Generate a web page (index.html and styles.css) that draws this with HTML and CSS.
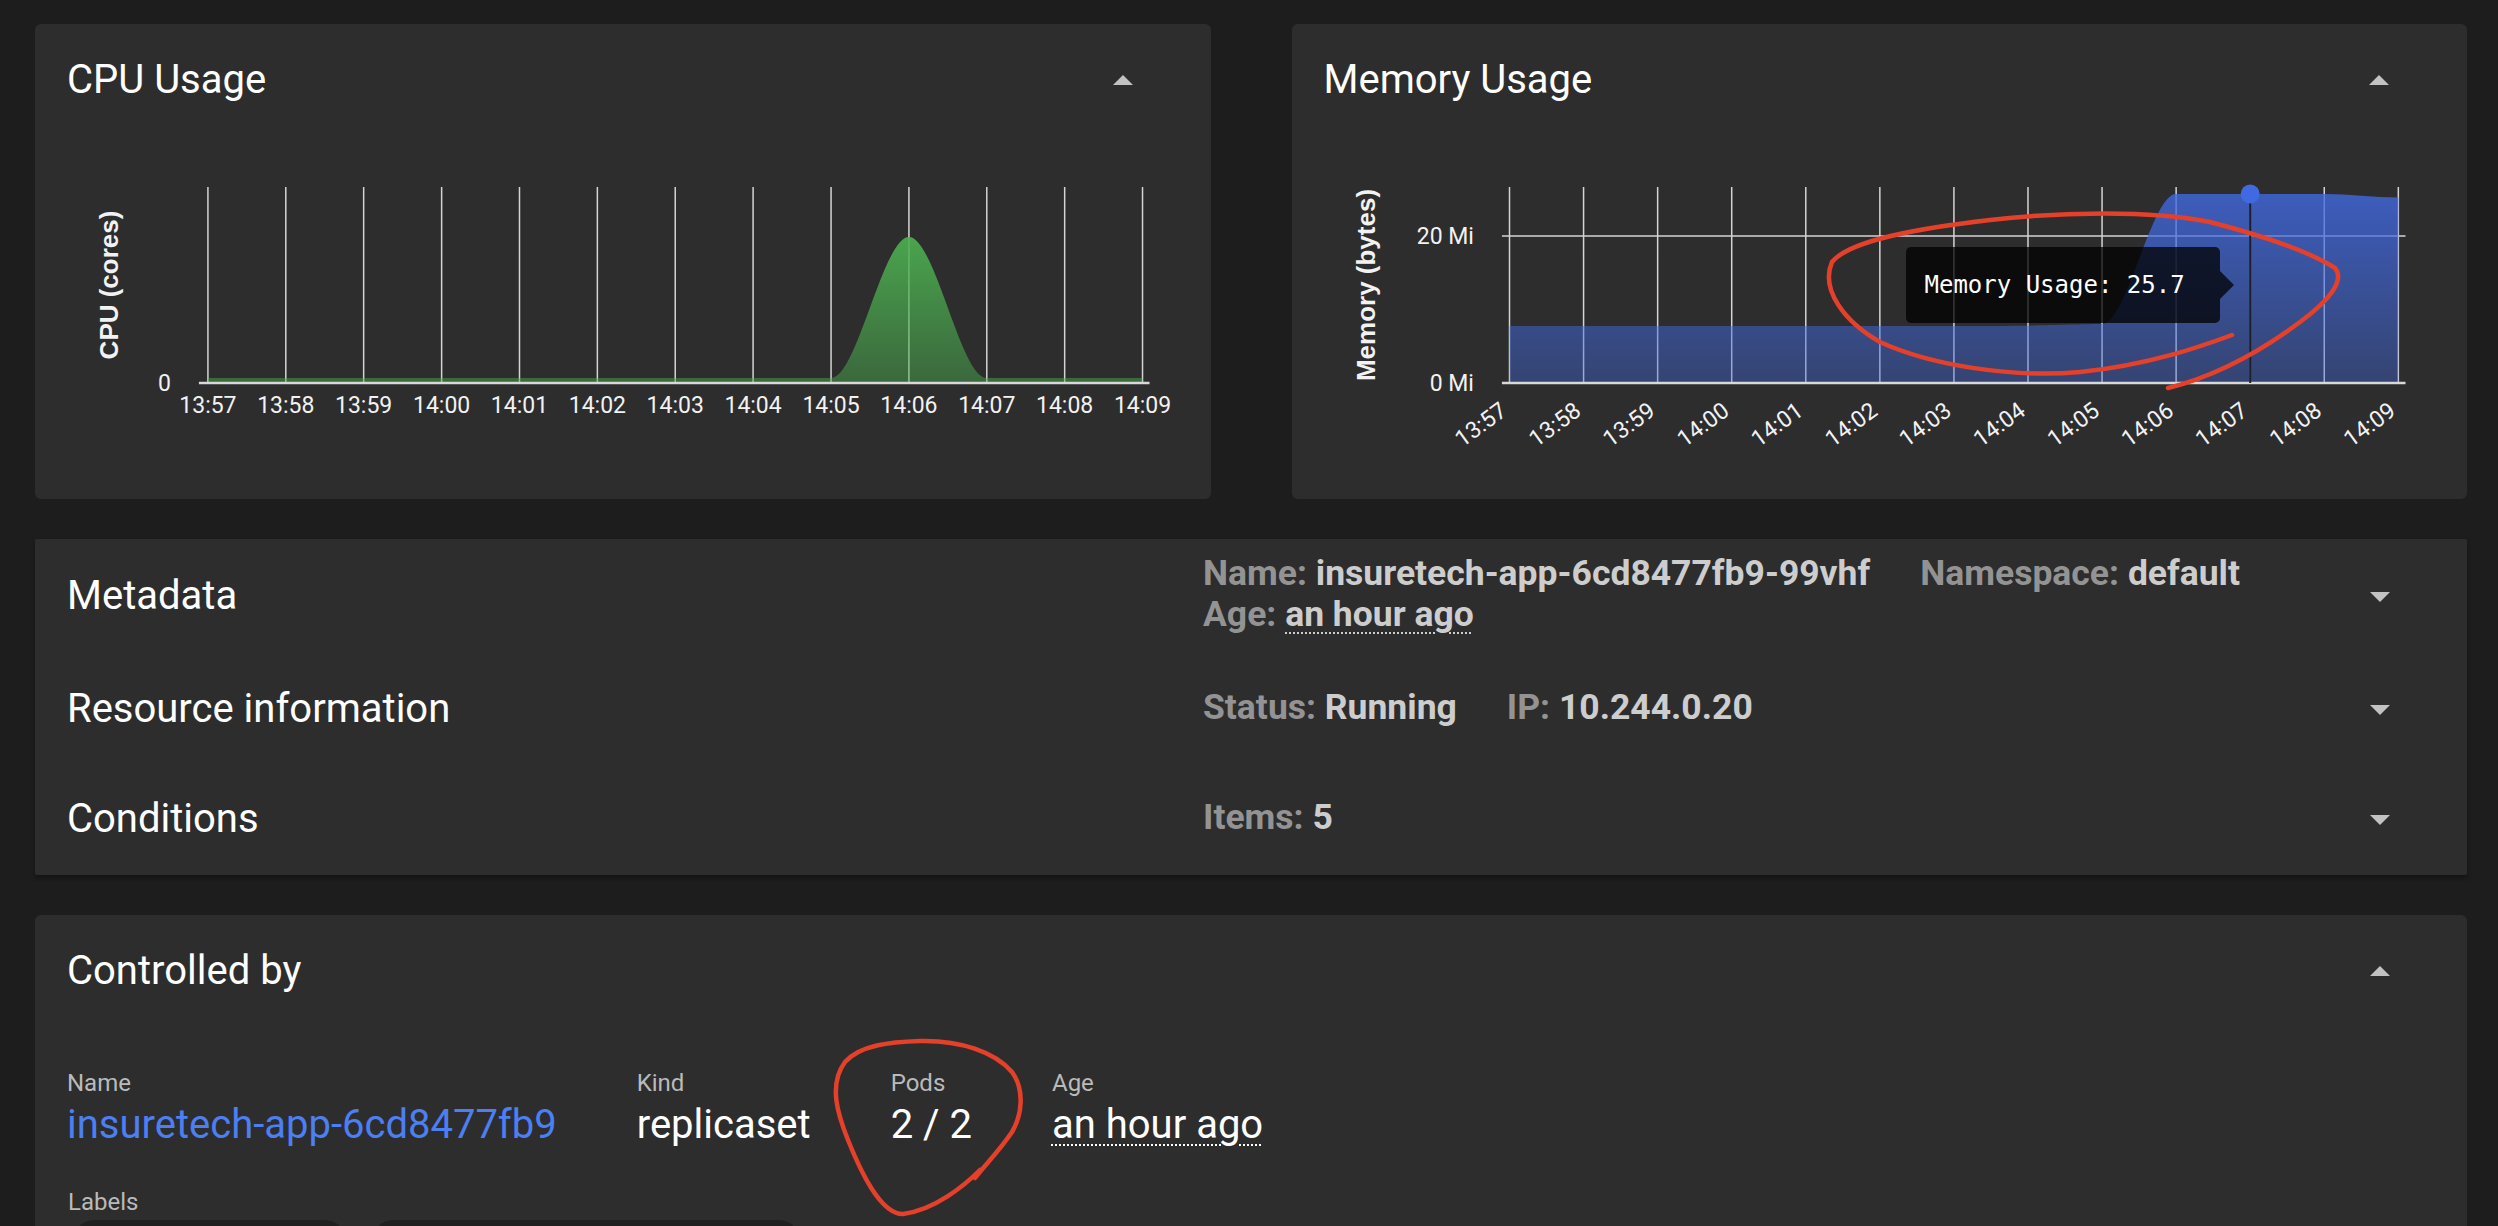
FILE: index.html
```html
<!DOCTYPE html>
<html lang="en">
<head>
<meta charset="utf-8">
<title>Pod details</title>
<link rel="stylesheet" href="styles.css">
</head>
<body>
<div class="page">
  <div class="charts">
    <section class="card chart-card">
      <header class="card-head">
        <h2 class="card-title">CPU Usage</h2>
        <svg class="caret" viewBox="0 0 20 10"><polygon points="0,10 10,0 20,10"/></svg>
      </header>
      <svg class="chart" viewBox="0 0 1176 397" preserveAspectRatio="none">
        <defs>
          <linearGradient id="gGreen" gradientUnits="userSpaceOnUse" x1="0" y1="135" x2="0" y2="281">
            <stop offset="0" stop-color="#4caf50" stop-opacity="0.92"/>
            <stop offset="1" stop-color="#4caf50" stop-opacity="0.45"/>
          </linearGradient>
        </defs>
        <g class="grid">
          <line x1="173" y1="85" x2="173" y2="281"/>
          <line x1="250.9" y1="85" x2="250.9" y2="281"/>
          <line x1="328.8" y1="85" x2="328.8" y2="281"/>
          <line x1="406.8" y1="85" x2="406.8" y2="281"/>
          <line x1="484.7" y1="85" x2="484.7" y2="281"/>
          <line x1="562.6" y1="85" x2="562.6" y2="281"/>
          <line x1="640.5" y1="85" x2="640.5" y2="281"/>
          <line x1="718.4" y1="85" x2="718.4" y2="281"/>
          <line x1="796.4" y1="85" x2="796.4" y2="281"/>
          <line x1="874.3" y1="85" x2="874.3" y2="281"/>
          <line x1="952.2" y1="85" x2="952.2" y2="281"/>
          <line x1="1030.1" y1="85" x2="1030.1" y2="281"/>
          <line x1="1108" y1="85" x2="1108" y2="281"/>
        </g>
        <path d="M173,276 L796.4,276 C822.4,276 848.3,135 874.3,135 C900.3,135 926.2,276 952.2,276 L1108,276 L1108,281 L173,281 Z" fill="url(#gGreen)"/>
        <line class="axis" x1="164" y1="281" x2="1115" y2="281"/>
        <text class="tick" x="136" y="289" text-anchor="end">0</text>
        <text class="axis-title" x="74" y="183" transform="rotate(-90 74 183)" text-anchor="middle" dominant-baseline="central">CPU (cores)</text>
        <g class="tick" text-anchor="middle">
          <text x="173" y="311">13:57</text>
          <text x="250.9" y="311">13:58</text>
          <text x="328.8" y="311">13:59</text>
          <text x="406.8" y="311">14:00</text>
          <text x="484.7" y="311">14:01</text>
          <text x="562.6" y="311">14:02</text>
          <text x="640.5" y="311">14:03</text>
          <text x="718.4" y="311">14:04</text>
          <text x="796.4" y="311">14:05</text>
          <text x="874.3" y="311">14:06</text>
          <text x="952.2" y="311">14:07</text>
          <text x="1030.1" y="311">14:08</text>
          <text x="1108" y="311">14:09</text>
        </g>
      </svg>
    </section>

    <section class="card chart-card">
      <header class="card-head">
        <h2 class="card-title">Memory Usage</h2>
        <svg class="caret" viewBox="0 0 20 10"><polygon points="0,10 10,0 20,10"/></svg>
      </header>
      <svg class="chart" viewBox="0 0 1176 397" preserveAspectRatio="none">
        <defs>
          <linearGradient id="gBlue" gradientUnits="userSpaceOnUse" x1="0" y1="92" x2="0" y2="281">
            <stop offset="0" stop-color="#4169e1" stop-opacity="0.8"/>
            <stop offset="1" stop-color="#4169e1" stop-opacity="0.38"/>
          </linearGradient>
        </defs>
        <g class="grid">
          <line x1="210" y1="134" x2="1114" y2="134"/>
          <line x1="217.6" y1="85" x2="217.6" y2="281"/>
          <line x1="291.7" y1="85" x2="291.7" y2="281"/>
          <line x1="365.8" y1="85" x2="365.8" y2="281"/>
          <line x1="439.9" y1="85" x2="439.9" y2="281"/>
          <line x1="514" y1="85" x2="514" y2="281"/>
          <line x1="588.1" y1="85" x2="588.1" y2="281"/>
          <line x1="662.2" y1="85" x2="662.2" y2="281"/>
          <line x1="736.3" y1="85" x2="736.3" y2="281"/>
          <line x1="810.4" y1="85" x2="810.4" y2="281"/>
          <line x1="884.5" y1="85" x2="884.5" y2="281"/>
          <line x1="958.6" y1="85" x2="958.6" y2="281"/>
          <line x1="1032.7" y1="85" x2="1032.7" y2="281"/>
          <line x1="1106.8" y1="85" x2="1106.8" y2="281"/>
        </g>
        <path d="M217.6,224 L700,224 C760,223.5 790,222 810.4,222 C835.1,222 859.8,92 884.5,92 L1032.7,92 C1057.4,92 1082.1,95.5 1106.8,95.5 L1106.8,281 L217.6,281 Z" fill="url(#gBlue)"/>
        <line class="axis" x1="210" y1="281" x2="1114" y2="281"/>
        <line class="cursor" x1="958.6" y1="92" x2="958.6" y2="281"/>
        <circle cx="958.6" cy="92" r="9.5" fill="#4169e1"/>
        <text class="tick" x="182" y="142" text-anchor="end">20 Mi</text>
        <text class="tick" x="182" y="289" text-anchor="end">0 Mi</text>
        <text class="axis-title" x="74" y="183" transform="rotate(-90 74 183)" text-anchor="middle" dominant-baseline="central">Memory (bytes)</text>
        <g class="tick" text-anchor="end">
          <text x="216.6" y="312" transform="rotate(-36 216.6 312)">13:57</text>
          <text x="290.7" y="312" transform="rotate(-36 290.7 312)">13:58</text>
          <text x="364.8" y="312" transform="rotate(-36 364.8 312)">13:59</text>
          <text x="438.9" y="312" transform="rotate(-36 438.9 312)">14:00</text>
          <text x="513" y="312" transform="rotate(-36 513 312)">14:01</text>
          <text x="587.1" y="312" transform="rotate(-36 587.1 312)">14:02</text>
          <text x="661.2" y="312" transform="rotate(-36 661.2 312)">14:03</text>
          <text x="735.3" y="312" transform="rotate(-36 735.3 312)">14:04</text>
          <text x="809.4" y="312" transform="rotate(-36 809.4 312)">14:05</text>
          <text x="883.5" y="312" transform="rotate(-36 883.5 312)">14:06</text>
          <text x="957.6" y="312" transform="rotate(-36 957.6 312)">14:07</text>
          <text x="1031.7" y="312" transform="rotate(-36 1031.7 312)">14:08</text>
          <text x="1105.8" y="312" transform="rotate(-36 1105.8 312)">14:09</text>
        </g>
      </svg>
      <div class="tooltip">Memory Usage: 25.7</div>
    </section>
  </div>

  <section class="card details">
    <div class="acc-row">
      <div class="acc-title">Metadata</div>
      <div class="acc-summary">
        <span class="kv"><span class="k">Name:</span> <span class="v">insuretech-app-6cd8477fb9-99vhf</span></span>
        <span class="kv"><span class="k">Namespace:</span> <span class="v">default</span></span>
        <span class="kv"><span class="k">Age:</span> <span class="v dotted">an hour ago</span></span>
      </div>
      <div class="acc-caret"><svg class="caret" viewBox="0 0 20 10"><polygon points="0,0 20,0 10,10"/></svg></div>
    </div>
    <div class="acc-row">
      <div class="acc-title">Resource information</div>
      <div class="acc-summary">
        <span class="kv"><span class="k">Status:</span> <span class="v">Running</span></span>
        <span class="kv"><span class="k">IP:</span> <span class="v">10.244.0.20</span></span>
      </div>
      <div class="acc-caret"><svg class="caret" viewBox="0 0 20 10"><polygon points="0,0 20,0 10,10"/></svg></div>
    </div>
    <div class="acc-row">
      <div class="acc-title">Conditions</div>
      <div class="acc-summary">
        <span class="kv"><span class="k">Items:</span> <span class="v">5</span></span>
      </div>
      <div class="acc-caret"><svg class="caret" viewBox="0 0 20 10"><polygon points="0,0 20,0 10,10"/></svg></div>
    </div>
  </section>

  <section class="card controlled">
    <header class="card-head">
      <h2 class="card-title">Controlled by</h2>
      <svg class="caret" viewBox="0 0 20 10"><polygon points="0,10 10,0 20,10"/></svg>
    </header>
    <div class="fields">
      <div class="field">
        <div class="field-label">Name</div>
        <div class="field-value link">insuretech-app-6cd8477fb9</div>
      </div>
      <div class="field">
        <div class="field-label">Kind</div>
        <div class="field-value">replicaset</div>
      </div>
      <div class="field">
        <div class="field-label">Pods</div>
        <div class="field-value">2 / 2</div>
      </div>
      <div class="field">
        <div class="field-label">Age</div>
        <div class="field-value dotted">an hour ago</div>
      </div>
    </div>
    <div class="labels-label">Labels</div>
    <div class="chips">
      <span class="chip chip-a"></span>
      <span class="chip chip-b"></span>
    </div>
  </section>
</div>

<svg class="annotations" viewBox="0 0 2498 1226">
  <path d="M2232,335 C2205,345 2150,365 2080,372 C2010,378 1930,365 1880,342 C1845,322 1820,290 1832,262 C1850,240 1920,228 1990,220 C2060,212 2150,210 2210,222 C2260,235 2310,252 2335,268 C2345,280 2330,300 2300,322 C2265,348 2220,375 2168,388"/>
  <path d="M980,1170 C965,1185 935,1210 903,1214 C880,1214 860,1170 848,1140 C838,1115 828,1085 845,1062 C860,1045 890,1042 920,1041 C960,1040 995,1052 1012,1072 C1025,1090 1022,1115 1012,1132 C1000,1150 985,1165 975,1178"/>
</svg>
</body>
</html>
```

FILE: styles.css
```css
html, body {
  margin: 0;
  padding: 0;
  overflow: hidden;
}

body {
  position: relative;
  width: 2498px;
  height: 1226px;
  background: #1d1d1d;
  color: #ffffff;
  font-family: Roboto, "Liberation Sans", sans-serif;
}

.page {
  padding: 24px 31px 0 35px;
}

.charts {
  display: grid;
  grid-template-columns: 1fr 1fr;
  column-gap: 81px;
}

.card {
  background: #2d2d2d;
  border-radius: 6px;
}

.chart-card {
  position: relative;
  height: 475px;
  overflow: hidden;
}

.card-head {
  display: flex;
  justify-content: space-between;
  align-items: center;
  height: 48px;
  padding: 32px 78px 0 32px;
}

.card-title {
  margin: 0;
  font-size: 40px;
  font-weight: 400;
  line-height: 48px;
  color: #ffffff;
}

.caret {
  display: block;
  width: 20px;
  height: 10px;
  fill: #c2c2c2;
}

.chart {
  display: block;
  width: 100%;
  height: 397px;
  margin-top: -2px;
}

.grid line {
  stroke: #d4d4d4;
  stroke-width: 1.5;
}

.axis {
  stroke: #d8d8d8;
  stroke-width: 2.5;
}

.cursor {
  stroke: #1c1f28;
  stroke-width: 2;
}

.tick {
  font-family: Roboto, "Liberation Sans", sans-serif;
  font-size: 23px;
  fill: #f2f2f2;
}

.axis-title {
  font-family: "Liberation Sans", Arial, sans-serif;
  font-weight: 700;
  font-size: 26px;
  fill: #f2f2f2;
}

.tooltip {
  position: absolute;
  left: 614px;
  top: 223px;
  width: 314px;
  height: 76px;
  box-sizing: border-box;
  padding-left: 19px;
  display: flex;
  align-items: center;
  background: rgba(0, 0, 0, 0.74);
  border-radius: 5px;
  font-family: "DejaVu Sans Mono", "Liberation Mono", monospace;
  font-size: 24px;
  color: #ffffff;
  white-space: nowrap;
}

.tooltip::after {
  content: "";
  position: absolute;
  right: -14px;
  top: 24px;
  border-top: 14px solid transparent;
  border-bottom: 14px solid transparent;
  border-left: 14px solid rgba(0, 0, 0, 0.74);
}

/* accordion card */
.details {
  margin-top: 40px;
  border-radius: 2px;
  box-shadow: 0 3px 4px rgba(0, 0, 0, 0.35);
}

.acc-row {
  display: grid;
  grid-template-columns: 1136px 1fr 110px;
  align-items: center;
  min-height: 110px;
  box-sizing: border-box;
  padding: 14px 32px 20px 32px;
}

.acc-title {
  font-size: 40px;
  line-height: 48px;
  margin-top: 4px;
  color: #ffffff;
}

.acc-summary {
  display: flex;
  flex-wrap: wrap;
  column-gap: 50px;
  font-size: 35.5px;
  font-weight: 700;
  line-height: 41px;
}

.k {
  color: #939393;
}

.v {
  color: #cdcdcd;
}

.dotted {
  text-decoration: underline dotted;
  text-decoration-thickness: 2px;
  text-underline-offset: 6px;
}

.acc-caret {
  display: flex;
  justify-content: center;
  margin-top: 6px;
}

/* controlled by */
.controlled {
  margin-top: 40px;
  height: 600px;
}

.controlled .card-head {
  padding-right: 77px;
}

.fields {
  display: flex;
  gap: 80px;
  padding: 71px 32px 0 32px;
}

.field-label,
.labels-label {
  font-size: 24px;
  line-height: 32px;
  color: #bababa;
}

.field .field-label {
  line-height: 35px;
}

.field-value {
  font-size: 40px;
  line-height: 48px;
  color: #ffffff;
}

.field-value.link {
  color: #4b7ff2;
}

.labels-label {
  margin-top: 37px;
  padding-left: 33px;
}

.chips {
  display: flex;
  gap: 28px;
  margin-top: 2px;
  padding-left: 39px;
}

.chip {
  height: 48px;
  border-radius: 20px;
  background: #202020;
}

.chip-a {
  width: 271px;
}

.chip-b {
  width: 426px;
}

/* hand-drawn red annotations over the screenshot */
.annotations {
  position: absolute;
  left: 0;
  top: 0;
  width: 2498px;
  height: 1226px;
  pointer-events: none;
  fill: none;
  stroke: #e5402a;
  stroke-width: 4.5;
  stroke-linecap: round;
  stroke-linejoin: round;
}
```
